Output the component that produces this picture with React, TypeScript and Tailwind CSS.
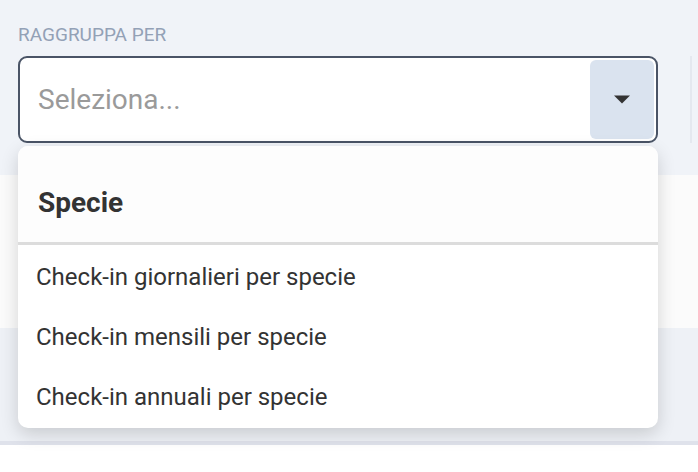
import React, { useState } from 'react';

const options = [
  'Check-in giornalieri per specie',
  'Check-in mensili per specie',
  'Check-in annuali per specie',
];

const Caret: React.FC = () => (
  <svg width="18" height="9" viewBox="0 0 18 9" className="block">
    <path d="M1 0.5 L17 0.5 L9 8.5 Z" fill="#333333" />
  </svg>
);

const App: React.FC = () => {
  const [value, setValue] = useState<string | null>(null);

  return (
    <div className="relative w-[698px] h-[472px] overflow-hidden bg-white font-['Roboto',sans-serif]">
      {/* top filter bar */}
      <div className="flex h-[175px] bg-[#f0f3f8] pl-[18px] pr-[6px]">
        <div className="flex w-[640px] flex-col pt-[25px]">
          <label className="h-[20px] text-[19px] leading-[20px] uppercase text-[#93a1b6]">
            Raggruppa per
          </label>
          <div className="mt-[11px] flex h-[87px] items-stretch rounded-[9px] border-2 border-[#4a5466] bg-white">
            <div className="flex flex-1 items-center pl-[18px] text-[28px] text-[#9a9a9a]">
              {value ?? 'Seleziona...'}
            </div>
            <button className="m-[2px] flex w-[64px] items-center justify-center rounded-[6px] bg-[#dae3ef]">
              <Caret />
            </button>
          </div>
        </div>
        <div className="ml-[32px] mt-[56px] h-[87px] w-[2px] bg-[#e4e8ef]" />
      </div>

      {/* content below */}
      <div className="h-[153px] bg-[#fbfbfb]" />
      <div className="h-[117px] border-b-4 border-[#dfe2eb] bg-[#eef1f6]" />

      {/* open menu */}
      <div className="absolute left-[18px] top-[146px] w-[640px] overflow-hidden rounded-[10px] bg-white shadow-[0_6px_18px_rgba(0,0,0,0.16)]">
        <div className="h-[96px] bg-[#fdfdfd] pl-[20px] pt-[41px] text-[28px] font-bold leading-[32px] text-[#333333]">
          Specie
        </div>
        <div className="h-[3px] bg-[#dcdcdc]" />
        <ul className="pt-[2px] pb-[1px]">
          {options.map((o) => (
            <li
              key={o}
              onClick={() => setValue(o)}
              className="flex h-[60px] cursor-pointer items-center pl-[18px] text-[24px] text-[#333333]"
            >
              {o}
            </li>
          ))}
        </ul>
      </div>
    </div>
  );
};

export default App;
